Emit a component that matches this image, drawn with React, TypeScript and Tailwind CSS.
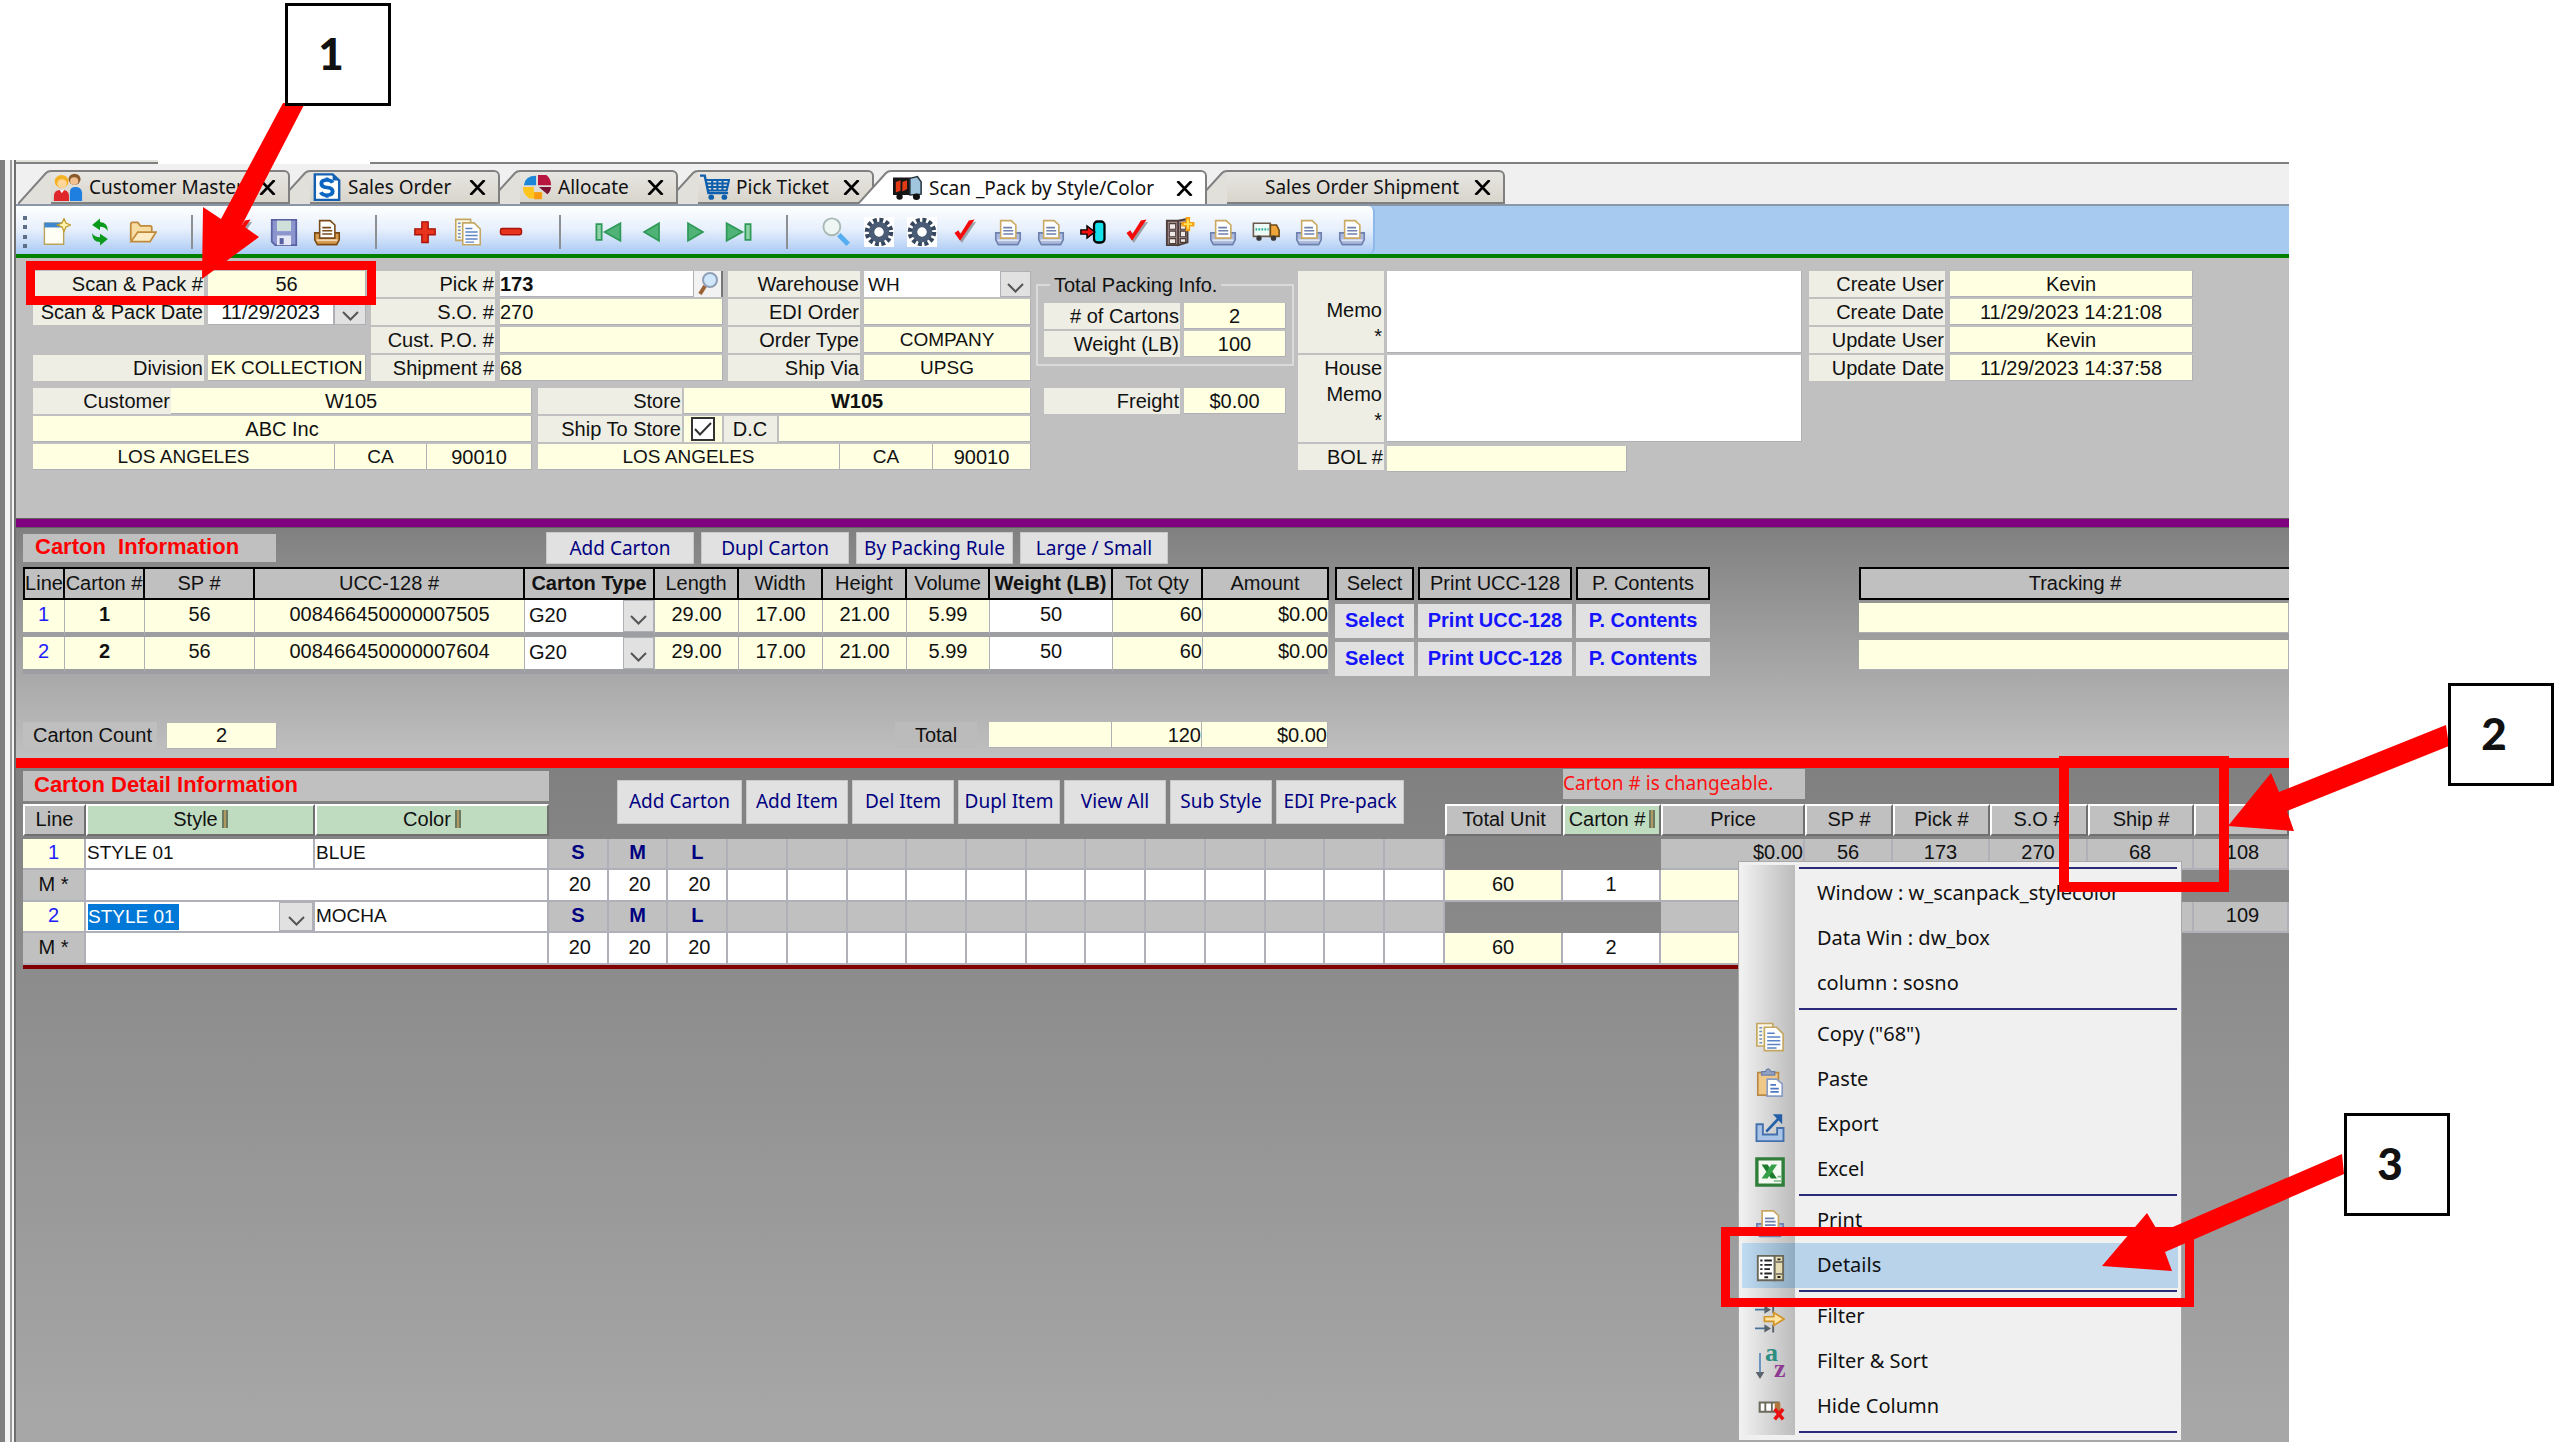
import { ReactNode } from "react";
import clsx from "clsx";

const TAHOMA = "font-['Noto_Sans',sans-serif]";

/* ---------- icons ---------- */

interface IconProps {
  className?: string;
}

function Svg({ className, children }: IconProps & { children: ReactNode }) {
  return (
    <svg viewBox="0 0 16 16" className={className ?? "h-7 w-7"} preserveAspectRatio="none" aria-hidden="true">
      {children}
    </svg>
  );
}

const PeopleIcon = ({ className }: IconProps) => (
  <Svg className={className}>
    <circle cx="11.5" cy="3.6" r="3.2" fill="#8a5a2b" />
    <circle cx="11.3" cy="4.6" r="2.2" fill="#f0c090" />
    <path d="M9 16V11q0-3 3-3t3.5 3v5z" fill="#1e7fe0" />
    <circle cx="4.6" cy="4.8" r="3.7" fill="#f4b324" />
    <circle cx="4.8" cy="6" r="2.5" fill="#ffd79a" />
    <path d="M.5 16v-3q0-3.5 4-3.5t4 3.5v3z" fill="#e0252b" />
    <path d="M3.5 9.5l1.2 2 1.3-2z" fill="#fff" />
  </Svg>
);

const SalesIcon = ({ className }: IconProps) => (
  <Svg className={className}>
    <path d="M1.5 .8h9.5l3.5 3.5v11h-13z" fill="#fff" stroke="#1560b0" strokeWidth="1.3" />
    <path d="M11 .8v3.5h3.5z" fill="#1560b0" />
    <path d="M11 5.6Q10.3 4 8 4 5 4 5 6t3 2.3 3 2.2-3 2.2Q5.5 12.7 4.7 11" fill="none" stroke="#0b66c3" strokeWidth="2.1" />
    <path d="M8 2.6v1.5M8 12.6v1.6" stroke="#0b66c3" strokeWidth="1.6" />
  </Svg>
);

const PieIcon = ({ className }: IconProps) => (
  <Svg className={className}>
    <path d="M7.5 7V1.5Q1.5 1.5 1 7z" fill="#1d86d8" />
    <path d="M8.5 1.2h4.5q2.5 2 2.5 5.8h-7z" fill="#b8163f" />
    <path d="M9 8h6.500q-.3 3-2 4.200z" fill="#7b1233" />
    <path d="M.5 8h5.800v3h4.500v3.500H4Q.5 12.500.5 8z" fill="#ffc51c" />
    <path d="M6.500 11h4v4h-4z" fill="#f79a12" />
  </Svg>
);

const CartIcon = ({ className }: IconProps) => (
  <Svg className={className}>
    <path d="M0 1.5h2.5l2 10h10.5" fill="none" stroke="#0d5fae" strokeWidth="1.3" />
    <path d="M3 4h12.5l-1.3 6H4.2M3.5 6h11.7M4 8h10.700M6.500 4v6M9.300 4v6M12 4v6" fill="none" stroke="#0d5fae" strokeWidth="1.1" />
    <circle cx="6" cy="13.8" r="1.5" fill="#0d5fae" />
    <circle cx="13" cy="13.8" r="1.5" fill="#0d5fae" />
  </Svg>
);

const ScanTruckIcon = ({ className }: IconProps) => (
  <Svg className={className}>
    <path d="M0 2h9.5v10H0z" fill="#161616" />
    <path d="M1.5 4.5l2.500-1v6l-2.500 1zM5 4.500l2.500-1v5L5 10z" fill="#e23a14" />
    <path d="M9 2.500l4-1 2 3v7l-6 .5z" fill="#9fc6dd" stroke="#24323c" strokeWidth=".8" />
    <circle cx="3.5" cy="13" r="1.7" fill="#111" />
    <circle cx="12.5" cy="13" r="1.9" fill="#111" />
  </Svg>
);

const NewIcon = () => (
  <Svg>
    <path d="M.8 3h11v12H.8z" fill="#fffef4" stroke="#b9a35b" strokeWidth=".8" />
    <path d="M.8 2.6h10v2.8H.8z" fill="#3f86cf" />
    <path d="M12 .3l1.1 2.6 2.7 1.1-2.7 1.1L12 7.7l-1.1-2.6L8.2 4l2.7-1.1z" fill="#fff3b0" stroke="#c09a2a" strokeWidth=".7" />
  </Svg>
);

const RefreshIcon = () => (
  <Svg>
    <path d="M8 .3L3.500 4 8 7V5q3 0 4.500 2.500Q12.500 2.500 8 2.300z" fill="#0c9a1c" />
    <path d="M8 15.700l4.500-3.700L8 9v2q-3 0-4.500-2.500Q3.500 13.500 8 13.700z" fill="#0c9a1c" />
  </Svg>
);

const FolderIcon = () => (
  <Svg>
    <path d="M1 13V3.5q0-1 1-1h3l1.5 2h5.5q1 0 1 1V8" fill="#f7dda4" stroke="#c08a3a" />
    <path d="M1.2 13.5L5 8h10.5L12 13.5z" fill="#fdebc4" stroke="#c08a3a" />
  </Svg>
);

const CheckIcon = () => (
  <Svg>
    <path d="M3.2 9.5l3 4.8L14.5 2l-2.6.8-5.3 7.8-1.4-2.6z" fill="#9aa0a8" />
    <path d="M2 8.5L5.2 13 13.5 .8l-3.3.6-4.8 7.8L4.2 7z" fill="#f50a0a" />
  </Svg>
);

const SaveIcon = () => (
  <Svg>
    <path d="M1 1h14v14.5H3L1 13.5z" fill="#8d95cf" stroke="#5a61a3" />
    <path d="M4 1.5h8v6H4z" fill="#cfe0da" />
    <path d="M4 10h8v5.5H4z" fill="#e6e9f5" />
    <path d="M5.5 11.5h2.3v3.5H5.5z" fill="#5a61a3" />
  </Svg>
);

interface PrinterIconProps extends IconProps {
  tone?: "brown" | "blue";
}

function PrinterIcon({ className, tone = "blue" }: PrinterIconProps) {
  const body = tone === "brown" ? "#d79a4b" : "#aab9dd";
  const edge = tone === "brown" ? "#7a4a18" : "#6d80ae";
  return (
    <Svg className={className}>
      <path d="M1 8.5h14v4l-1.5 2.7h-11L1 12.5z" fill={body} stroke={edge} strokeWidth=".9" />
      <path d="M3.8 11.5V1.5h6l2.7 2.5v7.5z" fill="#fff" stroke={tone === "brown" ? edge : "#c9a860"} strokeWidth=".9" />
      <path d="M5.3 5.5h5M5.3 7.3h5.7M5.3 9.1h5.7" stroke={edge} strokeWidth=".9" />
      <path d="M2 12.7h12" stroke="#fff" strokeOpacity=".6" />
    </Svg>
  );
}

const PlusIcon = () => (
  <Svg>
    <path d="M6.2 2.200h3.600v4h4v3.400h-4V14H6.200V9.600h-4V6.200h4z" fill="#e8341c" stroke="#a81208" strokeWidth=".8" />
  </Svg>
);

const MinusIcon = () => (
  <Svg>
    <rect x="2" y="6" width="12" height="3.6" rx="1" fill="#e8341c" stroke="#a81208" strokeWidth=".8" />
  </Svg>
);

const CopyIcon = ({ className }: IconProps) => (
  <Svg className={className}>
    <path d="M1 .8h8.5v12H1z" fill="#fbf7e4" stroke="#c3a763" strokeWidth=".9" />
    <path d="M2.3 3h1.5M2.3 5h1.5M2.3 7h1.5M2.3 9h1.5M2.3 11h1.5" stroke="#6f8fc4" strokeWidth=".8" />
    <path d="M5 2.8h6.5l3.5 3.5v9H5z" fill="#fff" stroke="#c3a763" strokeWidth=".9" />
    <path d="M6.5 6h4M6.5 8h7M6.5 10h7M6.5 12h7M6.5 13.8h5" stroke="#5b82c4" strokeWidth=".8" />
  </Svg>
);

const FirstIcon = () => (
  <Svg>
    <path d="M.8 3.5h3v9h-3z" fill="#8fd3a8" stroke="#2f9a58" />
    <path d="M14.5 3v10L5.5 8z" fill="#4fb277" stroke="#2f9a58" />
  </Svg>
);

const PrevIcon = () => (
  <Svg>
    <path d="M12 3v10L3.5 8z" fill="#4fb277" stroke="#2f9a58" />
  </Svg>
);

const NextIcon = () => (
  <Svg>
    <path d="M4 3v10l8.5-5z" fill="#4fb277" stroke="#2f9a58" />
  </Svg>
);

const LastIcon = () => (
  <Svg>
    <path d="M12.2 3.5h3v9h-3z" fill="#8fd3a8" stroke="#2f9a58" />
    <path d="M1.5 3v10l9-5z" fill="#4fb277" stroke="#2f9a58" />
  </Svg>
);

const SearchIcon = () => (
  <Svg className="h-[30px] w-[30px]">
    <circle cx="5.8" cy="5.2" r="4.5" fill="#eef6f4" stroke="#a7b9b4" />
    <path d="M9.5 9.5l5 5" stroke="#55aef0" strokeWidth="2.6" />
  </Svg>
);

const GearIcon = () => (
  <Svg className="h-[30px] w-[30px] bg-white">
    <circle cx="8" cy="8" r="6.3" fill="none" stroke="#36465c" strokeWidth="2.6" strokeDasharray="2 1.3" />
    <circle cx="8" cy="8" r="4" fill="none" stroke="#4a5c75" strokeWidth="3" />
    <circle cx="8" cy="8" r="2.3" fill="#fff" />
  </Svg>
);

const DoorIcon = () => (
  <Svg>
    <rect x="8" y="2" width="6" height="12" rx="2" fill="#16e0ea" stroke="#000" strokeWidth="1.3" />
    <path d="M.5 6.8h3.500V4.500L8.500 8 4 11.500V9.200H.5z" fill="#f01010" stroke="#000" strokeWidth=".8" />
  </Svg>
);

const CabinetIcon = () => (
  <Svg className="h-[30px] w-[30px]">
    <path d="M1 2h6v13H1zM7 2l5-1v12.500L7 15z" fill="#a58f8b" stroke="#4d3d3b" />
    <path d="M2.3 3.5h3.400v3H2.300zM2.300 7.500h3.400v3H2.300zM2.300 11.500h3.400v2.700H2.300zM8.200 3.500h2.800v3H8.200zM8.200 7.500h2.800v3H8.200zM8.200 11.500h2.800v2H8.200z" fill="#efe9e7" stroke="#4d3d3b" strokeWidth=".6" />
    <path d="M12.2 0v7.600M8.700 3.800h7" stroke="#f5a312" strokeWidth="2.4" />
    <path d="M12.2 1.3v5M10 3.800h4.500" stroke="#ffe45a" />
  </Svg>
);

const TruckIcon = () => (
  <Svg>
    <path d="M.8 3h9.7v7.5H.8z" fill="#eefaf6" stroke="#6b5a4a" strokeWidth=".9" />
    <path d="M2 6.5h7.5" stroke="#2fae9a" strokeWidth="1.2" strokeDasharray="1 .7" />
    <path d="M10.5 4h3.5l1.500 3v3.500h-5z" fill="#f0a53a" stroke="#6b4a1a" strokeWidth=".9" />
    <circle cx="4" cy="11.5" r="1.5" fill="#3a3a3a" />
    <circle cx="12.3" cy="11.5" r="1.5" fill="#3a3a3a" />
  </Svg>
);

const PasteIcon = ({ className }: IconProps) => (
  <Svg className={className}>
    <path d="M1.5 3h11v12h-11z" fill="#f0c988" stroke="#b98a45" strokeWidth=".9" />
    <path d="M3.5 4.3V2.5h2Q7 -.5 8.5 2.5h2v1.8z" fill="#93a3c6" stroke="#6b7da8" strokeWidth=".7" />
    <path d="M6.5 6.5h5l3 2.500v6.500h-8z" fill="#fff" stroke="#8a9cc4" strokeWidth=".9" />
    <path d="M8.2 9.5h3M8.2 11.5h4.5M8.2 13.3h4.5" stroke="#4e78c4" strokeWidth=".9" />
  </Svg>
);

const ExportIcon = ({ className }: IconProps) => (
  <Svg className={className}>
    <path d="M.8 6.500h3.400v5.500h7.600V8.500h3.400v7H.8z" fill="#a9c4e6" stroke="#4470ac" />
    <path d="M6 10.5L13 3" stroke="#235ea8" strokeWidth="1.4" />
    <path d="M9.5 1.2h5v5.3z" fill="#235ea8" />
  </Svg>
);

const ExcelIcon = ({ className }: IconProps) => (
  <Svg className={className}>
    <path d="M1 1h14v14H1z" fill="#f4faf2" stroke="#2f7f3a" strokeWidth="1.8" />
    <path d="M3.5 4h3.200l5 7.500H8.500z" fill="#1c7c2c" />
    <path d="M8.800 4h3L6.700 11.500H3.500z" fill="#36a048" />
    <path d="M10 12.8h4M12 10.5h2" stroke="#79b883" strokeWidth=".9" />
  </Svg>
);

const DetailsIcon = ({ className }: IconProps) => (
  <Svg className={className}>
    <path d="M1.500 1.5h9v13h-9z" fill="#fff" stroke="#6a6658" />
    <path d="M10.5 1.5H15v13h-4.5z" fill="#e6dcb4" stroke="#6a6658" />
    <path d="M11 4.8h4M11 11.2h4" stroke="#6a6658" strokeWidth=".8" />
    <path d="M2.8 4h1.200M2.800 6.300h1.200M2.800 8.600h1.200M2.800 10.900h1.200M5 4h4M5 6.300h4M5 8.600h3M5 10.900h4M5 12.900h2" stroke="#222" />
    <path d="M12 3.4h1.6M12 12.8h1.6" stroke="#222" />
  </Svg>
);

const FilterIcon = ({ className }: IconProps) => (
  <Svg className={className}>
    <path d="M0 3h6M0 13h6" stroke="#46739a" />
    <path d="M5 .8L8.5 3 5 5.2zM5 10.8L8.5 13 5 15.2z" fill="#56616c" />
    <path d="M9.7 .8v4M9.7 11v4.2" stroke="#56616c" />
    <path d="M5 6.8h5V4.5L15.5 8 10 11.5V9.3H5z" fill="#ffe3a0" stroke="#d0952a" strokeWidth=".9" />
  </Svg>
);

const SortIcon = ({ className }: IconProps) => (
  <span className={clsx("relative block font-['Liberation_Serif',serif] font-bold", className)} aria-hidden="true">
    <svg viewBox="0 0 10 30" className="absolute bottom-0 left-0 h-[26px] w-[10px]">
      <path d="M5 0v24" stroke="#5a89b8" strokeWidth="2" />
      <path d="M0 22h10l-5 8z" fill="#5b6570" />
    </svg>
    <span className="absolute -top-1.5 left-2.5 text-[26px] leading-5 text-[#2c8d80]">a</span>
    <span className="absolute top-2.5 left-[19px] text-[26px] leading-5 text-[#8e3a93]">z</span>
  </span>
);

const HideColumnIcon = ({ className }: IconProps) => (
  <Svg className={className}>
    <path d="M2.5 4.500h10v5h-10z" fill="#fff" stroke="#6c6a5c" strokeWidth="1.1" />
    <path d="M5.5 4.500v5M9 4.500v5" stroke="#6c6a5c" />
    <path d="M10.5 4.500h3v5h-3z" fill="#b3763d" />
    <path d="M10.500 8l4.500 5.500M15 8l-4.500 5.500" stroke="#e81010" strokeWidth="1.9" />
  </Svg>
);

const CloseIcon = () => (
  <svg viewBox="0 0 17 15" className="h-[15px] w-[17px]" aria-hidden="true">
    <path d="M1.5 0l14 15M15.5 0l-14 15" stroke="#000" strokeWidth="2.6" />
  </svg>
);

const Chevron = () => (
  <svg viewBox="0 0 17 10" className="h-[10px] w-[17px]" aria-hidden="true">
    <path d="M1 1l7.5 7.5L16 1" fill="none" stroke="#555" strokeWidth="2" />
  </svg>
);

/* ---------- tabs ---------- */

interface Tab {
  label: string;
  icon?: (p: IconProps) => ReactNode;
  width: string;
  active?: boolean;
  overlap?: boolean;
}

const TABS: Tab[] = [
  { label: "Customer Master", icon: PeopleIcon, width: "w-[272px]", overlap: true },
  { label: "Sales Order", icon: SalesIcon, width: "w-[210px]" },
  { label: "Allocate", icon: PieIcon, width: "w-[178px]" },
  { label: "Pick Ticket", icon: CartIcon, width: "w-[196px]" },
  { label: "Scan _Pack by Style/Color", icon: ScanTruckIcon, width: "w-[349px] -ml-4", active: true, overlap: true },
  { label: "Sales Order Shipment", width: "w-[298px]" },
];

function TabItem({ label, icon: Icon, width, active, overlap }: Tab) {
  const fill = active ? "#ffffff" : "#e2e0da";
  return (
    <div className={clsx("relative flex h-[34px]", width)}>
      <svg
        viewBox={overlap ? "0 0 33 34" : "13 0 20 34"}
        className={overlap ? "h-[34px] w-[33px] shrink-0" : "h-[34px] w-5 shrink-0"}
        aria-hidden="true"
      >
        <path d="M0 34L28 3q2-2 5-2v33z" fill={fill} />
        <path d="M0 34L28 3q2-2 5-2" fill="none" stroke="#808080" strokeWidth="2" />
      </svg>
      <div
        className={clsx(
          "flex min-w-0 flex-1 items-center rounded-tr-md border-t-2 border-r-2 border-[#808080] pr-3 pl-0.5",
          active ? "bg-white" : "border-b-2 bg-linear-to-b from-[#e8e6e2] to-[#d8d5cc]",
        )}
      >
        <button type="button" role="tab" aria-selected={!!active} className="flex items-center gap-1.5 whitespace-nowrap">
          {Icon ? <Icon className="h-7 w-[30px]" /> : <span className="w-[30px]" />}
          {label}
        </button>
        <button type="button" aria-label={`Close ${label}`} className="ml-auto">
          <CloseIcon />
        </button>
      </div>
    </div>
  );
}

/* ---------- toolbar ---------- */

const TOOLS: { name: string; icon: ReactNode }[][] = [
  [
    { name: "New", icon: <NewIcon /> },
    { name: "Refresh", icon: <RefreshIcon /> },
    { name: "Open", icon: <FolderIcon /> },
  ],
  [
    { name: "Confirm", icon: <CheckIcon /> },
    { name: "Save", icon: <SaveIcon /> },
    { name: "Print", icon: <PrinterIcon tone="brown" /> },
  ],
  [
    { name: "Add", icon: <PlusIcon /> },
    { name: "Copy", icon: <CopyIcon /> },
    { name: "Remove", icon: <MinusIcon /> },
  ],
  [
    { name: "First", icon: <FirstIcon /> },
    { name: "Previous", icon: <PrevIcon /> },
    { name: "Next", icon: <NextIcon /> },
    { name: "Last", icon: <LastIcon /> },
  ],
  [
    { name: "Search", icon: <SearchIcon /> },
    { name: "Process", icon: <GearIcon /> },
    { name: "Process all", icon: <GearIcon /> },
    { name: "Check pack", icon: <CheckIcon /> },
    { name: "Print list", icon: <PrinterIcon /> },
    { name: "Print label", icon: <PrinterIcon /> },
    { name: "Import", icon: <DoorIcon /> },
    { name: "Check shipment", icon: <CheckIcon /> },
    { name: "Inventory", icon: <CabinetIcon /> },
    { name: "Print inventory", icon: <PrinterIcon /> },
    { name: "Ship", icon: <TruckIcon /> },
    { name: "Print shipment", icon: <PrinterIcon /> },
    { name: "Print all", icon: <PrinterIcon /> },
  ],
];

function Toolbar() {
  return (
    <div className="h-[50px] border-t-2 border-[#8a97a8] bg-[#a6caf0]">
      <div className="flex h-full w-fit items-center rounded-r-md border-r-2 border-[#8fb8ea] bg-linear-to-b from-white via-[#e6effc] to-[#a9c9f3] pt-1">
        <div className="mr-2 ml-[7px] flex h-8 flex-col justify-between" aria-hidden="true">
          {[0, 1, 2, 3].map((dot) => (
            <span key={dot} className="h-1 w-1 bg-[#5d6f86]" />
          ))}
        </div>
        {TOOLS.map((group, i) => (
          <div key={i} className="flex items-center">
            {i > 0 && <span className="mr-[26px] ml-[27px] h-[34px] w-0.5 bg-[#8c8f94]" />}
            {group.map((tool) => (
              <button key={tool.name} type="button" aria-label={tool.name} className="flex w-[43px] justify-center">
                {tool.icon}
              </button>
            ))}
          </div>
        ))}
      </div>
    </div>
  );
}

/* ---------- form ---------- */

function Caption({ htmlFor, children, className }: { htmlFor?: string; children: ReactNode; className?: string }) {
  return (
    <label
      htmlFor={htmlFor}
      className={clsx("flex h-[26px] items-center justify-end bg-[#eeeee4] pr-px whitespace-nowrap", className)}
    >
      {children}
    </label>
  );
}

interface ValueProps {
  id?: string;
  name?: string;
  value?: string;
  className?: string;
}

function Value({ id, name, value = "", className }: ValueProps) {
  return (
    <input
      id={id}
      aria-label={name}
      readOnly
      value={value}
      className={clsx(
        "h-[26px] w-full min-w-0 border-r border-b border-[#aeb0b6] outline-none",
        className ?? "bg-[#ffffe1] text-center",
      )}
    />
  );
}

function Field({ id, label, value, className }: { id: string; label: string; value?: string; className?: string }) {
  return (
    <>
      <Caption htmlFor={id}>{label}</Caption>
      <Value id={id} value={value} className={className} />
    </>
  );
}

function SelectBox({ id, name, value }: { id?: string; name?: string; value: string }) {
  return (
    <div className="relative h-full w-full">
      <select id={id} aria-label={name} className="h-full w-full appearance-none bg-white pb-0.5 pl-1 outline-none" defaultValue={value}>
        <option>{value}</option>
      </select>
      <span className="pointer-events-none absolute inset-y-0 right-0 flex w-[31px] items-center justify-center border border-[#aeb0b6] bg-[#e1e1e1] pt-2">
        <Chevron />
      </span>
    </div>
  );
}

const CAPS = "bg-[#ffffe1] text-center text-[19px]";

function OrderForm() {
  return (
    <section className="flex items-start bg-[#c0c0c0] pt-[13px] pb-[46px] pl-[17px]">
      <div>
        <div className="flex">
          <div className="grid grid-cols-[171px_158px] content-start gap-x-1 gap-y-0.5">
            <Field id="sp" label="Scan & Pack #" value="56" />
            <Caption htmlFor="spdate">Scan & Pack Date</Caption>
            <div className="flex">
              <Value id="spdate" value="11/29/2023" className="bg-white text-center" />
              <button
                type="button"
                aria-label="Pick date"
                className="flex h-[26px] w-8 shrink-0 items-center justify-center border border-[#aeb0b6] bg-[#e1e1e1] pt-2"
              >
                <Chevron />
              </button>
            </div>
            <span className="col-span-2 h-[26px]" />
            <Field id="division" label="Division" value="EK COLLECTION" className={CAPS} />
          </div>
          <div className="ml-[5px] grid grid-cols-[124px_223px] gap-x-[5px] gap-y-0.5">
            <Caption htmlFor="pick">Pick #</Caption>
            <div className="flex">
              <Value id="pick" value="173" className="bg-white font-bold" />
              <button
                type="button"
                aria-label="Find pick"
                className="flex h-[26px] w-[29px] shrink-0 items-center justify-center border-r-2 border-[#777] bg-[#f2f2f2]"
              >
                <svg viewBox="0 0 20 24" className="h-6 w-5" aria-hidden="true">
                  <path d="M7 14l-5 8" stroke="#9a6232" strokeWidth="4" />
                  <circle cx="12" cy="8" r="7" fill="#cfe6fb" stroke="#8f9fb5" strokeWidth="2" />
                </svg>
              </button>
            </div>
            <Field id="so" label="S.O. #" value="270" className="bg-[#ffffe1]" />
            <Field id="po" label="Cust. P.O. #" className="bg-[#ffffe1]" />
            <Field id="shipment" label="Shipment #" value="68" className="bg-[#ffffe1]" />
          </div>
          <div className="ml-[5px] grid grid-cols-[132px_167px] gap-x-1 gap-y-0.5">
            <Caption htmlFor="warehouse">Warehouse</Caption>
            <div className="h-[26px] text-[19px]">
              <SelectBox id="warehouse" value="WH" />
            </div>
            <Field id="edi" label="EDI Order" />
            <Field id="otype" label="Order Type" value="COMPANY" className={CAPS} />
            <Field id="via" label="Ship Via" value="UPSG" className={CAPS} />
          </div>
        </div>

        <div className="mt-[7px] flex gap-1.5">
          <div className="grid w-[499px] gap-0.5">
            <div className="flex">
              <Caption htmlFor="customer" className="w-[138px] shrink-0">
                Customer
              </Caption>
              <Value id="customer" value="W105" />
            </div>
            <Value name="Customer name" value="ABC Inc" />
            <div className="grid grid-cols-[302px_92px_105px]">
              <Value name="Customer city" value="LOS ANGELES" className={CAPS} />
              <Value name="Customer state" value="CA" className={CAPS} />
              <Value name="Customer zip" value="90010" />
            </div>
          </div>
          <div className="grid w-[493px] gap-0.5">
            <div className="flex gap-0.5">
              <Caption htmlFor="store" className="w-36 shrink-0">
                Store
              </Caption>
              <Value id="store" value="W105" className="bg-[#ffffe1] text-center font-bold" />
            </div>
            <div className="flex gap-0.5">
              <Caption htmlFor="shipstore" className="w-36 shrink-0">
                Ship To Store
              </Caption>
              <span className="relative flex h-[26px] w-[38px] shrink-0 items-center justify-center bg-[#ffffe1]">
                <input
                  id="shipstore"
                  type="checkbox"
                  defaultChecked
                  className="h-6 w-6 appearance-none border-2 border-[#333] bg-white"
                />
                <svg viewBox="0 0 18 14" className="pointer-events-none absolute h-3.5 w-[18px]" aria-hidden="true">
                  <path d="M1 7l5 5.5L17 1" fill="none" stroke="#333" strokeWidth="2" />
                </svg>
              </span>
              <Caption htmlFor="dc" className="w-[53px] shrink-0 justify-center!">
                D.C
              </Caption>
              <Value id="dc" />
            </div>
            <div className="grid grid-cols-[302px_93px_98px]">
              <Value name="Store city" value="LOS ANGELES" className={CAPS} />
              <Value name="Store state" value="CA" className={CAPS} />
              <Value name="Store zip" value="90010" />
            </div>
          </div>
        </div>
      </div>

      <div className="mr-1.5 ml-[5px] w-64">
        <fieldset className="border-2 border-[#dadada] px-1.5 pt-1 pb-[7px]">
          <legend className="ml-1.5 px-1">Total Packing Info.</legend>
          <div className="grid grid-cols-[136px_102px] gap-x-1 gap-y-0.5">
            <Field id="cartons" label="# of Cartons" value="2" />
            <Field id="weight" label="Weight (LB)" value="100" />
          </div>
        </fieldset>
        <div className="mt-[22px] grid grid-cols-[136px_102px] gap-x-1 pl-2">
          <Field id="freight" label="Freight" value="$0.00" />
        </div>
      </div>

      <div className="grid grid-cols-[86px_415px] gap-x-[3px] gap-y-0.5">
        <label htmlFor="memo" className="bg-[#eeeee4] pt-[26px] pr-0.5 text-right leading-[26px]">
          Memo
          <br />*
        </label>
        <textarea id="memo" className="h-[82px] resize-none border-r border-b border-[#aeb0b6] bg-white outline-none" />
        <label htmlFor="housememo" className="bg-[#eeeee4] pr-0.5 text-right leading-[26px]">
          House
          <br />
          Memo
          <br />*
        </label>
        <textarea id="housememo" className="h-[87px] resize-none border-r border-b border-[#aeb0b6] bg-white outline-none" />
        <Caption htmlFor="bol">BOL #</Caption>
        <div className="w-60">
          <Value id="bol" />
        </div>
      </div>

      <div className="ml-[7px] grid grid-cols-[136px_243px] gap-x-[5px] gap-y-0.5">
        <Field id="cuser" label="Create User" value="Kevin" />
        <Field id="cdate" label="Create Date" value="11/29/2023 14:21:08" />
        <Field id="uuser" label="Update User" value="Kevin" />
        <Field id="udate" label="Update Date" value="11/29/2023 14:37:58" />
      </div>
    </section>
  );
}

/* ---------- carton information ---------- */

function FlatButton({ children, className }: { children: ReactNode; className: string }) {
  return (
    <button
      type="button"
      className={clsx(
        TAHOMA,
        "flex items-center justify-center border border-[#c8c8c8] bg-[#e1e1e1] text-[19px] leading-none whitespace-nowrap text-[#000080]",
        className,
      )}
    >
      {children}
    </button>
  );
}

const CARTON_COLUMNS = [
  { title: "Line", width: "w-[42px]" },
  { title: "Carton #", width: "w-[80px]" },
  { title: "SP #", width: "w-[110px]" },
  { title: "UCC-128 #", width: "w-[270px]" },
  { title: "Carton Type", width: "w-[130px]", bold: true },
  { title: "Length", width: "w-[84px]" },
  { title: "Width", width: "w-[84px]" },
  { title: "Height", width: "w-[84px]" },
  { title: "Volume", width: "w-[83px]" },
  { title: "Weight (LB)", width: "w-[123px]", bold: true },
  { title: "Tot Qty", width: "w-[90px]" },
  { title: "Amount", width: "w-[126px]" },
];

const CARTONS = [
  { line: 1, ucc: "008466450000007505" },
  { line: 2, ucc: "008466450000007604" },
];

const ACTIONS = [
  { title: "Select", width: "w-[79px]" },
  { title: "Print UCC-128", width: "w-[154px]" },
  { title: "P. Contents", width: "w-[134px]" },
];

function CartonInformation() {
  const head =
    "h-[33px] border-y-2 border-r-2 border-black bg-[#c0c0c0] p-0 pb-0.5 leading-none whitespace-nowrap first:border-l-2";
  const cell =
    "h-[37px] border-r border-b-[5px] border-r-[#aeb0b6] border-b-[#9d9ea2] bg-[#ffffe1] p-0 align-top leading-7";
  return (
    <section className="bg-linear-to-b from-[#808080] to-[#c0c0c0] pt-1 pb-[9px] pl-[7px]">
      <div className="flex h-8 items-center">
        <h2 className="h-7 w-[253px] bg-[#c0c0c0] pl-3 text-[22px] leading-[26px] font-bold whitespace-pre text-[#f00]">
          {"Carton  Information"}
        </h2>
        <div className="ml-[270px] flex gap-[7px]">
          <FlatButton className="h-8 w-[148px]">Add Carton</FlatButton>
          <FlatButton className="h-8 w-[148px]">Dupl Carton</FlatButton>
          <FlatButton className="h-8 w-[157px]">By Packing Rule</FlatButton>
          <FlatButton className="h-8 w-[148px]">Large / Small</FlatButton>
        </div>
      </div>

      <div className="mt-[3px] flex items-start">
        <table className="table-fixed border-separate border-spacing-0 text-center">
          <colgroup>
            {CARTON_COLUMNS.map((c) => (
              <col key={c.title} className={c.width} />
            ))}
          </colgroup>
          <thead>
            <tr>
              {CARTON_COLUMNS.map((c) => (
                <th key={c.title} className={clsx(head, c.bold ? "font-bold" : "font-normal")}>
                  {c.title}
                </th>
              ))}
            </tr>
          </thead>
          <tbody>
            {CARTONS.map((row) => (
              <tr key={row.line}>
                <td className={clsx(cell, "text-[#2020ff]")}>{row.line}</td>
                <td className={clsx(cell, "font-bold")}>{row.line}</td>
                <td className={cell}>56</td>
                <td className={cell}>{row.ucc}</td>
                <td className={clsx(cell, "bg-white!")}>
                  <div className="h-8">
                    <SelectBox name={`Carton type ${row.line}`} value="G20" />
                  </div>
                </td>
                <td className={cell}>29.00</td>
                <td className={cell}>17.00</td>
                <td className={cell}>21.00</td>
                <td className={cell}>5.99</td>
                <td className={clsx(cell, "bg-white!")}>50</td>
                <td className={clsx(cell, "text-right")}>60</td>
                <td className={clsx(cell, "text-right")}>$0.00</td>
              </tr>
            ))}
          </tbody>
        </table>

        <div className="ml-1.5 flex gap-1">
          {ACTIONS.map((a) => (
            <div key={a.title} className={clsx("flex flex-col gap-1", a.width)}>
              <div className="flex h-[33px] items-center justify-center border-2 border-black bg-[#c0c0c0] pb-0.5">
                {a.title}
              </div>
              {CARTONS.map((row) => (
                <button
                  key={row.line}
                  type="button"
                  className="h-[34px] bg-[#e1e1e1] pb-0.5 leading-none font-bold whitespace-nowrap text-[#1414ff]"
                >
                  {a.title}
                </button>
              ))}
            </div>
          ))}
        </div>

        <div className="ml-[149px] min-w-0 flex-1">
          <div className="flex h-[33px] items-center justify-center border-2 border-r-0 border-black bg-[#c0c0c0] pb-0.5">
            Tracking #
          </div>
          {CARTONS.map((row) => (
            <div key={row.line} className="h-[37px] pt-[3px]">
              <Value name={`Tracking ${row.line}`} className="h-[30px]! bg-[#ffffe1]" />
            </div>
          ))}
        </div>
      </div>

      <div className="mt-[45px] flex h-7 items-center">
        <label htmlFor="count" className="w-[134px] bg-[#bfbfbf] pl-2.5 leading-[26px] whitespace-nowrap">
          Carton Count
        </label>
        <div className="ml-2.5 w-[110px]">
          <Value id="count" value="2" />
        </div>
        <span className="ml-[618px] w-[82px] bg-[#bbbbbb] text-center leading-[26px]">Total</span>
        <div className="ml-3 grid grid-cols-[123px_90px_126px]">
          <Value name="Total weight" />
          <Value name="Total quantity" value="120" className="bg-[#ffffe1] text-right" />
          <Value name="Total amount" value="$0.00" className="bg-[#ffffe1] text-right" />
        </div>
      </div>
    </section>
  );
}

/* ---------- carton detail ---------- */

const SIZES = ["S", "M", "L", "", "", "", "", "", "", "", "", "", "", "", ""];

const DETAIL_BUTTONS = [
  { title: "Add Carton", width: "w-[125px]" },
  { title: "Add Item", width: "w-[102px]" },
  { title: "Del Item", width: "w-[102px]" },
  { title: "Dupl Item", width: "w-[102px]" },
  { title: "View All", width: "w-[102px]" },
  { title: "Sub Style", width: "w-[102px]" },
  { title: "EDI Pre-pack", width: "w-[128px]" },
];

const DETAILS = [
  { line: 1, style: "STYLE 01", color: "BLUE", last: "108", editing: false },
  { line: 2, style: "STYLE 01", color: "MOCHA", last: "109", editing: true },
];

const DETAIL_WIDTHS = ["w-[118px]", "w-[98px]", "w-[144px]", "w-[88px]", "w-[97px]", "w-[98px]", "w-[106px]", "w-[95px]"];

function HeadCell({ title, sorted }: { title: string; sorted?: boolean }) {
  return (
    <th
      className={clsx(
        "h-8 border-2 border-t-white border-r-[#707070] border-b-[#707070] border-l-white p-0 pb-0.5 leading-none font-normal whitespace-nowrap",
        sorted ? "bg-[#c0dcc0]" : "bg-[#c0c0c0]",
      )}
    >
      <span className="inline-flex items-center gap-1">
        {title}
        {sorted && <span className="h-[18px] w-1.5 border-x-2 border-[#6d7a62] bg-[#b09a62]" />}
      </span>
    </th>
  );
}

function CartonDetail() {
  const cell = "border-r-2 border-b-2 border-[#b0b0b8] p-0 pb-[3px] leading-none";
  const grey = clsx(cell, "bg-[#c0c0c0]");
  return (
    <section className="flex-1 bg-linear-to-b from-[#808080] to-[#a8a8a8] pl-[7px]">
      <table className="w-full table-fixed border-separate border-spacing-0 text-center">
        <colgroup>
          <col className="w-[63px]" />
          <col className="w-[229px]" />
          <col className="w-[234px]" />
          {SIZES.map((_, i) => (
            <col key={i} />
          ))}
          {DETAIL_WIDTHS.map((w, i) => (
            <col key={i} className={w} />
          ))}
        </colgroup>
        <thead>
          <tr>
            <th colSpan={3} className="h-9 p-0">
              <h2 className="h-[30px] bg-[#c0c0c0] pl-[11px] text-left text-[22px] leading-7 font-bold text-[#f00]">
                Carton Detail Information
              </h2>
            </th>
            <td colSpan={15} rowSpan={2} className="p-0">
              <div className="flex gap-1 pl-[68px]">
                {DETAIL_BUTTONS.map((b) => (
                  <FlatButton key={b.title} className={clsx("h-11 pb-0.5", b.width)}>
                    {b.title}
                  </FlatButton>
                ))}
              </div>
            </td>
            <td />
            <td colSpan={2} className="p-0 pb-1">
              <p className={clsx(TAHOMA, "h-[30px] bg-[#c0c0c0] text-left text-[19px] leading-7 whitespace-nowrap text-[#ff1010]")}>
                Carton # is changeable.
              </p>
            </td>
            <td colSpan={5} />
          </tr>
          <tr>
            <HeadCell title="Line" />
            <HeadCell title="Style" sorted />
            <HeadCell title="Color" sorted />
            <HeadCell title="Total Unit" />
            <HeadCell title="Carton #" sorted />
            <HeadCell title="Price" />
            <HeadCell title="SP #" />
            <HeadCell title="Pick #" />
            <HeadCell title="S.O #" />
            <HeadCell title="Ship #" />
            <HeadCell title="" />
          </tr>
          <tr>
            <td colSpan={26} className="h-[3px] p-0" />
          </tr>
        </thead>
        {DETAILS.map((row) => (
          <tbody key={row.line}>
            <tr className="h-[31px]">
              <td className={clsx(cell, "bg-[#ffffe1] text-[#2020ff]")}>{row.line}</td>
              <td className={clsx(cell, "bg-white text-left text-[19px]", row.editing && "pb-0!")}>
                {row.editing ? (
                  <div className="flex h-[29px] items-center justify-between pl-0.5">
                    <input
                      aria-label="Style"
                      defaultValue={row.style}
                      className="h-[26px] w-[91px] bg-[#0078d7] text-white outline-none"
                    />
                    <button
                      type="button"
                      aria-label="Choose style"
                      className="flex h-[29px] w-[34px] items-center justify-center border border-[#aeb0b6] bg-[#e1e1e1] pt-2"
                    >
                      <Chevron />
                    </button>
                  </div>
                ) : (
                  <span className="pl-px">{row.style}</span>
                )}
              </td>
              <td className={clsx(cell, "bg-white text-left text-[19px]")}>
                <span className="pl-px">{row.color}</span>
              </td>
              {SIZES.map((size, i) => (
                <td key={i} className={clsx(grey, "font-bold text-[#000080]")}>
                  {size}
                </td>
              ))}
              <td className="p-0" />
              <td className="p-0" />
              <td className={clsx(grey, "text-right")}>$0.00</td>
              <td className={grey}>56</td>
              <td className={grey}>173</td>
              <td className={grey}>270</td>
              <td className={grey}>68</td>
              <td className={clsx(grey, "border-r-0 pl-1")}>{row.last}</td>
            </tr>
            <tr className="h-8">
              <td className={grey}>M *</td>
              <td colSpan={2} className={clsx(cell, "bg-white")} />
              {SIZES.map((size, i) => (
                <td key={i} className={clsx(cell, "bg-white pl-1")}>
                  {size && "20"}
                </td>
              ))}
              <td className={clsx(cell, "bg-[#ffffe1]")}>60</td>
              <td className={clsx(cell, "bg-white")}>{row.line}</td>
              <td className={clsx(cell, "bg-[#ffffe1]")} />
              <td colSpan={5} className="p-0" />
            </tr>
          </tbody>
        ))}
        <tfoot>
          <tr>
            <td colSpan={21} className="h-1 bg-[#800000] p-0" />
            <td colSpan={5} className="p-0" />
          </tr>
        </tfoot>
      </table>
    </section>
  );
}

/* ---------- context menu ---------- */

interface MenuEntry {
  label: string;
  icon?: (p: IconProps) => ReactNode;
  selected?: boolean;
}

const MENU: MenuEntry[][] = [
  [{ label: "Window : w_scanpack_stylecolor" }, { label: "Data Win : dw_box" }, { label: "column : sosno" }],
  [
    { label: 'Copy ("68")', icon: CopyIcon },
    { label: "Paste", icon: PasteIcon },
    { label: "Export", icon: ExportIcon },
    { label: "Excel", icon: ExcelIcon },
  ],
  [
    { label: "Print", icon: PrinterIcon },
    { label: "Details", icon: DetailsIcon, selected: true },
  ],
  [
    { label: "Filter", icon: FilterIcon },
    { label: "Filter & Sort", icon: SortIcon },
    { label: "Hide Column", icon: HideColumnIcon },
  ],
];

function MenuRule() {
  return (
    <div role="separator" className="flex h-1.5 items-center">
      <span className="h-full w-[53px] bg-linear-to-r from-[#f0f0f0] to-[#bcbcbc]" />
      <span className="mr-px ml-1 h-0.5 flex-1 bg-[#2a2a78]" />
    </div>
  );
}

function ContextMenu() {
  return (
    <div
      role="menu"
      className={clsx(TAHOMA, "absolute top-[861px] left-[1738px] w-[444px] border border-[#a8a8a8] bg-[#f0f0f0] p-[3px] pb-[5px]")}
    >
      {MENU.map((group, i) => (
        <div key={i}>
          <MenuRule />
          {group.map(({ label, icon: Icon, selected }) => (
            <button
              key={label}
              type="button"
              role="menuitem"
              className={clsx("flex h-[45px] w-full items-center text-left", selected && "bg-[#b8d3ea]")}
            >
              <span
                className={clsx(
                  "flex h-full w-[53px] items-center justify-end bg-linear-to-r pt-1 pr-2.5",
                  selected ? "from-[#c0dcf3] to-[#8fabc2]" : "from-[#f0f0f0] to-[#bcbcbc]",
                )}
              >
                {Icon && <Icon className="h-[30px] w-[30px]" />}
              </span>
              <span className="pb-0.5 pl-[22px] whitespace-nowrap">{label}</span>
            </button>
          ))}
        </div>
      ))}
      <MenuRule />
    </div>
  );
}

/* ---------- callouts ---------- */

function Callout({ children, className }: { children: ReactNode; className: string }) {
  return (
    <div
      className={clsx(
        "absolute flex h-[103px] w-[106px] items-center justify-center border-[3px] border-black bg-white pr-3.5 pb-1 font-['Lato',sans-serif] text-[44px] leading-none font-black",
        className,
      )}
    >
      {children}
    </div>
  );
}

function Annotations() {
  return (
    <>
      <div className="pointer-events-none absolute top-[261px] left-[26px] h-11 w-[350px] border-[9px] border-[#f00]" />
      <div className="pointer-events-none absolute top-[756px] left-[2059px] h-[136px] w-[170px] border-[10px] border-[#f00]" />
      <div className="pointer-events-none absolute top-[1227px] left-[1721px] h-20 w-[473px] border-[9px] border-[#f00]" />
      <svg viewBox="0 0 2562 1448" className="pointer-events-none absolute top-0 left-0 h-[1448px] w-[2562px]" aria-hidden="true">
        <g fill="#f00">
          <path d="M283 103h22l-63 122 0 0 17 12-57 42 1-72 18 12z" />
          <path d="M2446 725l3 21-162 65 7 20-66-5 43-53 8 19z" />
          <path d="M2342 1154l2 20-179 78 7 19-70-5 45-53 12 20z" />
        </g>
      </svg>
      <Callout className="top-[3px] left-[285px]">1</Callout>
      <Callout className="top-[683px] left-[2448px]">2</Callout>
      <Callout className="top-[1113px] left-[2344px]">3</Callout>
    </>
  );
}

export default function App() {
  return (
    <main className="relative flex min-h-screen flex-col overflow-hidden bg-white pt-40 pr-[273px] pb-1.5 font-['Liberation_Sans',Arial,sans-serif] text-xl leading-7 text-[#111]">
      <div className="flex flex-1 bg-[#f0f0f0]">
        <div className="w-4 shrink-0 border-r-2 border-l-[5px] border-r-[#6e6e6e] border-l-[#808080] bg-[#f4f4f4]">
          <div className="ml-[5px] h-full w-0.5 bg-[#9a9a9a]" />
        </div>
        <div className="flex min-w-0 flex-1 flex-col">
          <div className="flex h-1" aria-hidden="true">
            <span className="w-[142px] border-b-2 border-[#808080] bg-[#e4e2dc]" />
            <span className="w-[212px] bg-white" />
            <span className="flex-1 border-b-2 border-[#808080] bg-white" />
          </div>
          <div role="tablist" className={clsx(TAHOMA, "flex pt-1.5 pl-0.5 text-[19px]")}>
            {TABS.map((tab) => (
              <TabItem key={tab.label} {...tab} />
            ))}
          </div>
          <Toolbar />
          <div className="h-1 bg-[#008000]" />
          <OrderForm />
          <div className="h-2.5 border-y border-[#606060] bg-[#800080]" />
          <CartonInformation />
          <div className="h-2.5 bg-[#f00]" />
          <CartonDetail />
        </div>
      </div>
      <ContextMenu />
      <Annotations />
    </main>
  );
}
